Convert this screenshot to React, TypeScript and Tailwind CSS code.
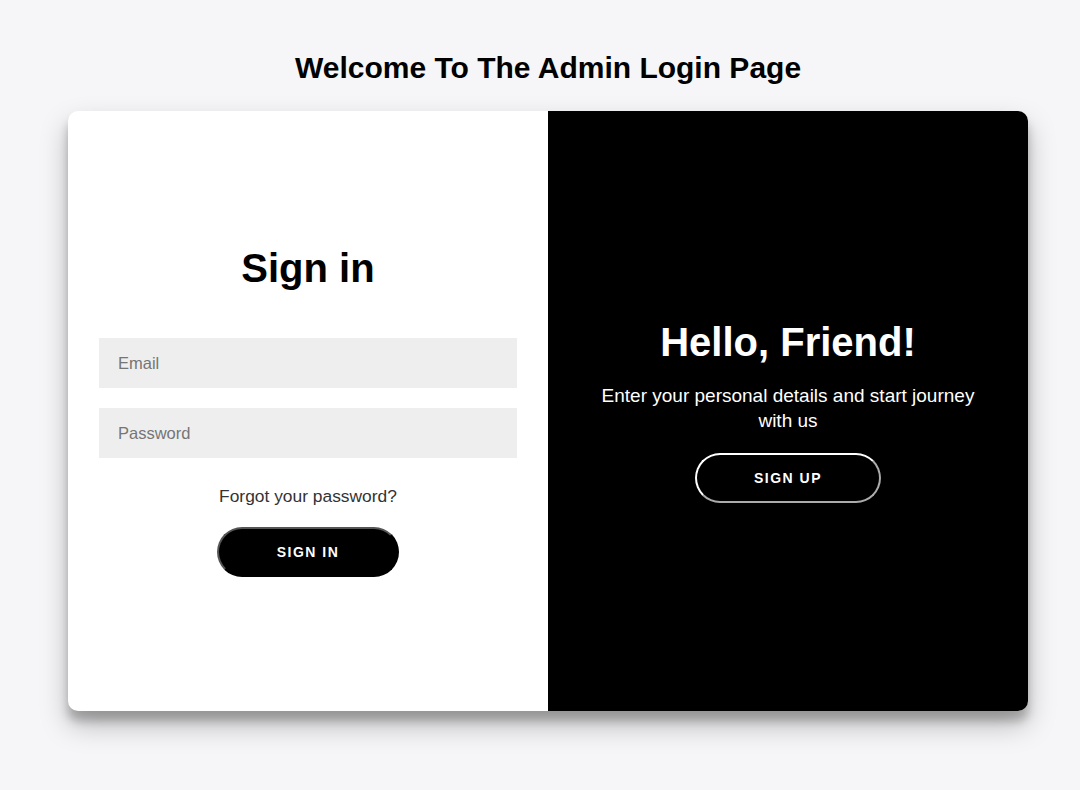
export default function App() {
  return (
    <div className="min-h-screen bg-[#f6f5f7] flex flex-col items-center pt-[51px] pl-[16px] font-['Liberation_Sans',Arial,sans-serif]">
      <h2 className="text-[30px] leading-[34px] font-bold text-black">Welcome To The Admin Login Page</h2>

      <div className="mt-[26px] w-[960px] h-[600px] flex rounded-[10px] overflow-hidden bg-white shadow-[0_14px_28px_rgba(0,0,0,0.25),0_10px_10px_rgba(0,0,0,0.22)]">
        {/* Sign in */}
        <form className="w-1/2 h-full flex flex-col items-center justify-center px-[31px] text-center" onSubmit={(e) => e.preventDefault()}>
          <h1 className="text-[40px] leading-[46px] font-bold text-black mb-[47px]">Sign in</h1>
          <input
            type="email"
            placeholder="Email"
            className="w-full h-[50px] bg-[#eee] px-[19px] text-[16.5px] text-black placeholder:text-[#757575] outline-none"
          />
          <input
            type="password"
            placeholder="Password"
            className="w-full h-[50px] mt-[20px] bg-[#eee] px-[19px] text-[16.5px] text-black placeholder:text-[#757575] outline-none"
          />
          <a href="#" className="mt-[29px] text-[17.4px] leading-[18px] text-[#333]">Forgot your password?</a>
          <button className="mt-[22px] w-[182px] h-[50px] rounded-full bg-black text-white text-[14px] font-bold tracking-[1.5px] border-2 border-[#555] [border-style:outset]">
            SIGN IN
          </button>
        </form>

        {/* Sign up overlay */}
        <div className="w-1/2 h-full bg-black text-white flex flex-col items-center justify-center px-[40px] text-center">
          <h1 className="text-[40px] leading-[46px] font-bold">Hello, Friend!</h1>
          <p className="mt-[18px] text-[19px] leading-[25px] max-w-[400px]">Enter your personal details and start journey with us</p>
          <button className="mt-[20px] w-[186px] h-[50px] rounded-full bg-transparent text-white text-[14px] font-bold tracking-[1.5px] border-2 border-white [border-style:outset]">
            SIGN UP
          </button>
        </div>
      </div>
    </div>
  );
}
